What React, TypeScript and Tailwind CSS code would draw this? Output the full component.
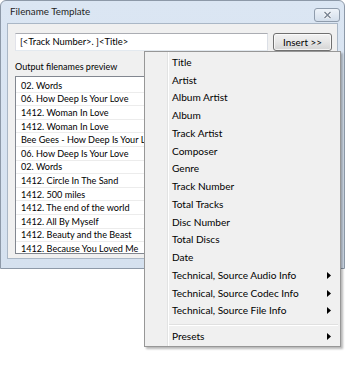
import React from "react";

const rows = [
  "02. Words",
  "06. How Deep Is Your Love",
  "1412. Woman In Love",
  "1412. Woman In Love",
  "Bee Gees - How Deep Is Your Love",
  "06. How Deep Is Your Love",
  "02. Words",
  "1412. Circle In The Sand",
  "1412. 500 miles",
  "1412. The end of the world",
  "1412. All By Myself",
  "1412. Beauty and the Beast",
  "1412. Because You Loved Me",
];

const items: { label: string; sub?: boolean }[] = [
  { label: "Title" },
  { label: "Artist" },
  { label: "Album Artist" },
  { label: "Album" },
  { label: "Track Artist" },
  { label: "Composer" },
  { label: "Genre" },
  { label: "Track Number" },
  { label: "Total Tracks" },
  { label: "Disc Number" },
  { label: "Total Discs" },
  { label: "Date" },
  { label: "Technical, Source Audio Info", sub: true },
  { label: "Technical, Source Codec Info", sub: true },
  { label: "Technical, Source File Info", sub: true },
];

function Arrow() {
  return (
    <svg width="4" height="7" viewBox="0 0 4 7" className="mr-[9px]">
      <path d="M0 0 L4 3.5 L0 7 Z" fill="#000" />
    </svg>
  );
}

function MenuItem({ label, sub }: { label: string; sub?: boolean }) {
  return (
    <div className="flex h-[17.75px] items-center justify-between pl-[3px] text-[10.1px] text-black">
      <span>{label}</span>
      {sub ? <Arrow /> : null}
    </div>
  );
}

export default function App() {
  return (
    <div className="relative h-[377px] w-[350px] overflow-hidden bg-white font-['Lato',sans-serif]">
      {/* Window */}
      <div className="flex h-[269px] w-[345px] flex-col rounded-t-[6px] border border-[#8d99a8] bg-gradient-to-b from-[#dbe6f3] to-[#d5e1ef]">
        {/* Title bar */}
        <div className="flex h-[22px] items-end justify-between pb-[1px]">
          <span className="mb-[3px] pl-[9px] text-[9.8px] text-[#1f1f1f]">Filename Template</span>
          <div className="mr-[4px] flex h-[14px] w-[26px] items-center justify-center rounded-[3px] border border-[#8f9cac] bg-gradient-to-b from-[#eef3f9] to-[#d3deeb]">
            <svg width="9" height="8" viewBox="0 0 9 8">
              <path d="M1.5 1 L7.5 7 M7.5 1 L1.5 7" stroke="#ffffff" strokeWidth="3" />
              <path d="M1.5 1 L7.5 7 M7.5 1 L1.5 7" stroke="#7a8594" strokeWidth="1.5" />
            </svg>
          </div>
        </div>
        {/* Client */}
        <div className="mx-[6px] flex h-[236px] flex-col border border-[#aab7c6] bg-[#f0f0f0] pl-[7px] pr-[5px] pt-[9px]">
          <div className="flex h-[18px] gap-[5px]">
            <div className="flex h-[18px] w-[253px] items-center border border-[#abadb3] border-b-[#e3e9ef] border-l-[#e2e3ea] border-r-[#dbdfe6] bg-white pl-[4px] text-[9.4px] text-black">
              [&lt;Track Number&gt;. ]&lt;Title&gt;
            </div>
            <div className="flex h-[18px] w-[59px] items-center justify-center rounded-[3px] border border-[#707070] bg-gradient-to-b from-[#f2f2f2] via-[#e6e6e6] to-[#d4d4d4] text-[9.9px] text-black shadow-[inset_0_0_0_1px_rgba(255,255,255,0.7)]">
              Insert &gt;&gt;
            </div>
          </div>
          <div className="mt-[10px] flex h-[12px] items-center text-[9px] text-black">Output filenames preview</div>
          <div className="mt-[3px] h-[178px] w-[317px] overflow-hidden border border-[#828790] bg-white pt-[2px]">
            {rows.map((r, i) => (
              <div
                key={i}
                className="flex h-[13.6px] items-center whitespace-nowrap border-b border-[#ececec] pl-[5px] text-[9.1px] leading-none text-black"
              >
                {r}
              </div>
            ))}
          </div>
        </div>
      </div>

      {/* Context menu */}
      <div className="absolute left-[144px] top-[51px] flex w-[197px] border border-[#979797] bg-[#f0f0f0] shadow-[2px_2px_2px_rgba(0,0,0,0.28)]">
        <div className="w-[23px] border-r border-[#e2e3e3]" />
        <div className="flex flex-1 flex-col border-l border-white pb-[1px] pt-[1.5px]">
          {items.map((it) => (
            <MenuItem key={it.label} label={it.label} sub={it.sub} />
          ))}
          <div className="mt-[4px] mb-[1.5px] mr-[2px] border-t border-b border-t-[#e0e0e0] border-b-white" />
          <MenuItem label="Presets" sub />
        </div>
      </div>
    </div>
  );
}
